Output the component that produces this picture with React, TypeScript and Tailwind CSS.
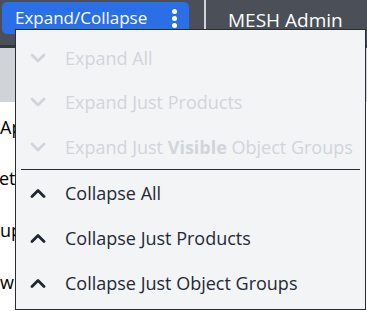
import React from 'react';

const font = "font-['Segoe_UI','Open_Sans','Noto_Sans',sans-serif]";

function Chevron({ up, disabled }: { up?: boolean; disabled?: boolean }) {
  return (
    <svg width="16" height="10" viewBox="0 0 16 10" className="shrink-0">
      <polyline
        points={up ? '2,8.5 8,2.5 14,8.5' : '2,2 8,8 14,2'}
        fill="none"
        stroke={disabled ? '#d1d5db' : '#1f2630'}
        strokeWidth="2.8"
        strokeLinecap="round"
        strokeLinejoin="round"
      />
    </svg>
  );
}

function Item({ up, disabled, h, children }: { up?: boolean; disabled?: boolean; h: string; children: React.ReactNode }) {
  return (
    <div className={`flex items-center gap-[19px] pl-[14px] ${h} ${disabled ? 'text-[#d1d5db]' : 'text-[#1f2937]'}`}>
      <Chevron up={up} disabled={disabled} />
      <span className="whitespace-nowrap text-[18px] leading-none">{children}</span>
    </div>
  );
}

export default function App() {
  return (
    <div className={`relative w-[367px] h-[311px] overflow-hidden bg-white ${font}`}>
      {/* top bar */}
      <header className="flex h-[45px] items-start bg-[#4b5058]">
        <button className="ml-[2px] mt-[2px] flex h-[32px] w-[187px] items-center justify-between rounded-[5px] bg-[#2b6fe6] pl-[13px] pr-[12px] text-[17px] text-white">
          <span>Expand/Collapse</span>
          <span className="flex flex-col gap-[2px]">
            <span className="h-[5px] w-[5px] rounded-full bg-white" />
            <span className="h-[5px] w-[5px] rounded-full bg-white" />
            <span className="h-[5px] w-[5px] rounded-full bg-white" />
          </span>
        </button>
        <div className="ml-[15px] h-[45px] w-[2px] bg-[#d1d5db]" />
        <div className="ml-[22px] mt-[6px] whitespace-nowrap text-[19px] text-white">MESH Admin</div>
      </header>
      <div className="h-[3px] bg-[#33383f]" />
      <div className="h-[54px] bg-[#d0d4d9]" />

      {/* rows behind the menu */}
      <div className="flex flex-col text-[18px] text-black">
        <div className="flex h-[50px] items-center">Ap</div>
        <div className="flex h-[52px] items-center -ml-[1px]">ete</div>
        <div className="flex h-[52px] items-center">up</div>
        <div className="flex h-[52px] items-center">w</div>
      </div>

      {/* dropdown */}
      <div className="absolute left-[15px] top-[29px] h-[281px] w-[351px] border border-[#2a2d33] bg-[#f3f4f6] pt-[6px]">
        <Item disabled h="h-[44px]">Expand All</Item>
        <Item disabled h="h-[44px]">Expand Just Products</Item>
        <Item disabled h="h-[45px]">
          Expand Just <b className="font-bold">Visible</b> Object Groups
        </Item>
        <div className="ml-[5px] mr-[5px] h-px bg-[#2a2d33]" />
        <Item up h="h-[45px]">Collapse All</Item>
        <Item up h="h-[45px]">Collapse Just Products</Item>
        <Item up h="h-[45px]">Collapse Just Object Groups</Item>
      </div>
    </div>
  );
}
